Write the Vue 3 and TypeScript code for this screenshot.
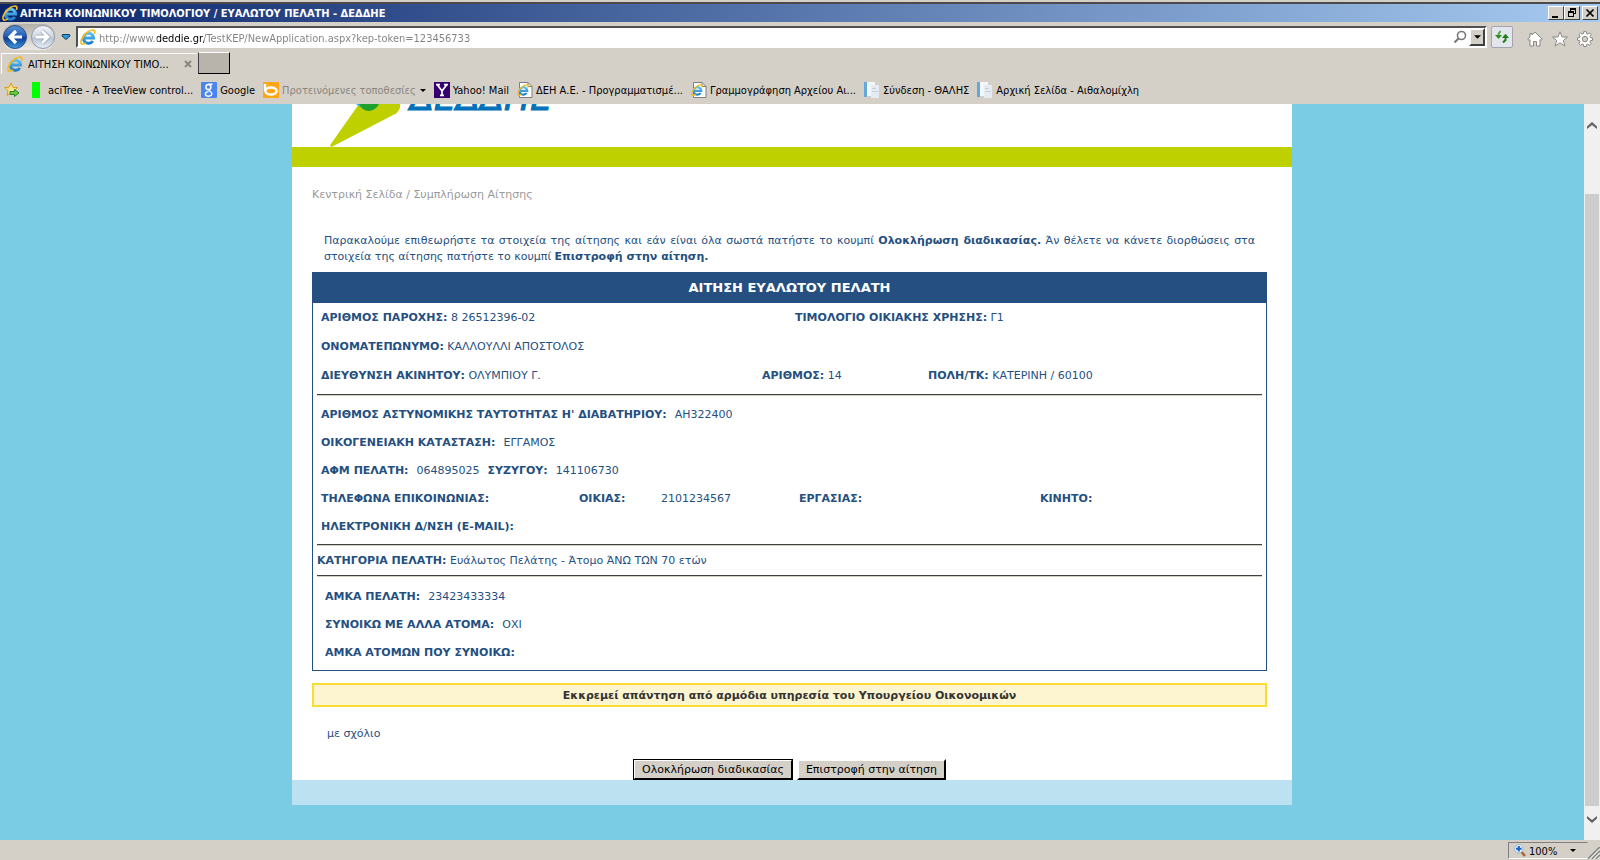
<script setup lang="ts">
import { ref } from 'vue'

interface Favorite {
  label: string
  icon: 'green' | 'google' | 'bing' | 'yahoo' | 'iepage' | 'doc'
  muted?: boolean
}

const address = ref('http://www.deddie.gr/TestKEP/NewApplication.aspx?kep-token=123456733')

const favorites: Favorite[] = [
  { label: 'aciTree - A TreeView control...', icon: 'green' },
  { label: 'Google', icon: 'google' },
  { label: 'Προτεινόμενες τοποθεσίες', icon: 'bing', muted: true },
  { label: 'Yahoo! Mail', icon: 'yahoo' },
  { label: 'ΔΕΗ Α.Ε. - Προγραμματισμέ...', icon: 'iepage' },
  { label: 'Γραμμογράφηση Αρχείου Αι...', icon: 'iepage' },
  { label: 'Σύνδεση - ΘΑΛΗΣ', icon: 'doc' },
  { label: 'Αρχική Σελίδα - Αιθαλομίχλη', icon: 'doc' },
]
</script>

<template>
  <div class="browser">
    <svg width="0" height="0" class="defs" aria-hidden="true">
      <defs>
        <linearGradient id="ieBlue" x1="0" y1="0" x2="0" y2="1">
          <stop offset="0" stop-color="#5cc0f0" />
          <stop offset="1" stop-color="#1c7fcb" />
        </linearGradient>
        <linearGradient id="navBlue" x1="0" y1="0" x2="0" y2="1">
          <stop offset="0" stop-color="#5f93d4" />
          <stop offset="0.45" stop-color="#2360b4" />
          <stop offset="0.55" stop-color="#0f3f92" />
          <stop offset="1" stop-color="#3f9be6" />
        </linearGradient>
        <linearGradient id="navPale" x1="0" y1="0" x2="0" y2="1">
          <stop offset="0" stop-color="#f2f4f7" />
          <stop offset="0.5" stop-color="#d0d7e2" />
          <stop offset="0.55" stop-color="#b9c4d6" />
          <stop offset="1" stop-color="#e6edf6" />
        </linearGradient>
        <symbol id="ie" viewBox="0 0 16 16">
          <path d="M4.4 9H13.6A5.100 5 0 1 0 12.800 12" fill="none" stroke="url(#ieBlue)" stroke-width="3" />
          <path d="M1.600 14.800C-.6 12.600 3.400 5.600 8.400 2.600C12.600 .2 15.900 .4 14.600 4.200" fill="none" stroke="#f5b921" stroke-width="1.700" stroke-linecap="round" />
          <path d="M1.600 14.800C2.600 15.600 4.200 15 5.600 14" fill="none" stroke="#f5b921" stroke-width="1.400" stroke-linecap="round" />
        </symbol>
      </defs>
    </svg>

    <header class="titlebar">
      <svg class="ico16"><use href="#ie" /></svg>
      <h1>ΑΙΤΗΣΗ ΚΟΙΝΩΝΙΚΟΥ ΤΙΜΟΛΟΓΙΟΥ / ΕΥΑΛΩΤΟΥ ΠΕΛΑΤΗ - ΔΕΔΔΗΕ</h1>
      <div class="winbtns">
        <button type="button" aria-label="Minimize">
          <svg viewBox="0 0 14 12"><path d="M3 9h6v2H3z" /></svg>
        </button>
        <button type="button" aria-label="Restore">
          <svg viewBox="0 0 14 12"><path d="M5 1h6v6H9V6h1V3H6v1H5zM3 4h6v6H3zM4 6v3h4V6z" fill-rule="evenodd" /></svg>
        </button>
        <button type="button" aria-label="Close" class="close">
          <svg viewBox="0 0 14 12"><path d="M3.500 2.500l7 7M10.500 2.500l-7 7" fill="none" stroke="#000" stroke-width="1.700" /></svg>
        </button>
      </div>
    </header>

    <div class="navrow">
      <div class="backfwd">
        <button type="button" aria-label="Back">
          <svg viewBox="0 0 26 26">
            <circle cx="13" cy="13" r="11.500" fill="url(#navBlue)" stroke="#2b4f86" />
            <path d="M20 13H8.500M14 7L8 13L14 19" fill="none" stroke="#fff" stroke-width="3.200" />
          </svg>
        </button>
        <button type="button" aria-label="Forward">
          <svg viewBox="0 0 26 26">
            <circle cx="13" cy="13" r="11.500" fill="url(#navPale)" stroke="#8e99ab" />
            <path d="M6 13H17.500M12 7L18 13L12 19" fill="none" stroke="#9aa5b6" stroke-width="4.400" />
            <path d="M6 13H17.500M12 7L18 13L12 19" fill="none" stroke="#fff" stroke-width="2.800" />
          </svg>
        </button>
      </div>
      <button type="button" class="recent" aria-label="Recent pages">
        <svg viewBox="0 0 10 8"><path d="M1.500 1.500H8.500L9 3L5 6.500L1 3z" fill="#2c9ad6" stroke="#123f63" /></svg>
      </button>
      <form class="address" @submit.prevent>
        <svg class="ico16"><use href="#ie" /></svg>
        <input v-model="address" type="text" aria-label="Address" />
        <button type="button" class="search" aria-label="Search">
          <svg viewBox="0 0 14 14"><circle cx="8.500" cy="5.500" r="4" fill="none" stroke="#7a7a7a" stroke-width="1.600" /><path d="M5.500 8.500L1.500 12.500" stroke="#7a7a7a" stroke-width="2.200" /></svg>
        </button>
        <button type="button" class="drop" aria-label="Show address history">
          <svg viewBox="0 0 8 4"><path d="M0 0H8L4 4z" /></svg>
        </button>
      </form>
      <button type="button" class="refresh" aria-label="Refresh">
        <svg viewBox="0 0 16 16">
          <path d="M6.500 2.200L4.500 5V7.500" fill="none" stroke="#57a83b" stroke-width="2" />
          <path d="M1 6H8L4.500 10z" fill="#2f8b22" />
          <path d="M9 13.500L11.500 11V8" fill="none" stroke="#1f7f18" stroke-width="2" />
          <path d="M8 9H15L11.500 4.800z" fill="#1f7f18" />
        </svg>
      </button>
      <div class="tools">
        <button type="button" aria-label="Home">
          <svg viewBox="0 0 16 16"><path d="M8 1L15.300 8.200L14 9.400L13 8.600V15H9.500V10.500H6.500V15H3V8.600L2 9.400L.7 8.200L3 6V2.500H5V4z" /></svg>
        </button>
        <button type="button" aria-label="Favorites">
          <svg viewBox="0 0 16 16"><path d="M8 .8L10.100 6H15.500L11.300 9.500L12.900 15L8 11.800L3.100 15L4.700 9.500L.5 6H5.900z" /></svg>
        </button>
        <button type="button" aria-label="Tools">
          <svg viewBox="0 0 16 16"><path fill-rule="evenodd" d="M6.800.6H9.200L9.600 2.700L10.900 3.200L12.700 2L14.300 3.700L13 5.400L13.400 6.600L15.500 7V9.300L13.400 9.700L12.900 11L14.100 12.700L12.500 14.300L10.800 13.100L9.600 13.500L9.200 15.500H6.800L6.400 13.500L5.200 13L3.500 14.200L1.800 12.500L3 10.800L2.600 9.600L.5 9.200V6.900L2.600 6.500L3.100 5.300L1.900 3.600L3.500 2L5.200 3.200L6.400 2.700zM8 5.400A2.700 2.700 0 1 0 8 10.800A2.700 2.700 0 1 0 8 5.400z" /></svg>
        </button>
      </div>
    </div>

    <div class="tabs" role="tablist">
      <div class="tab" role="tab" aria-selected="true">
        <svg class="ico16"><use href="#ie" /></svg>
        <span>ΑΙΤΗΣΗ ΚΟΙΝΩΝΙΚΟΥ ΤΙΜΟ...</span>
        <button type="button" aria-label="Close tab">
          <svg viewBox="0 0 8 8"><path d="M1 1L7 7M7 1L1 7" stroke="#8a8680" stroke-width="2" /></svg>
        </button>
      </div>
      <button type="button" class="newtab" aria-label="New tab"></button>
    </div>

    <nav class="favorites">
      <button type="button" class="addfav" aria-label="Add to favorites">
        <svg viewBox="0 0 16 16">
          <path d="M7 1L8.900 5.200L13.500 5.600L10 8.700L11 13.400L7 11L3 13.400L4 8.700L.6 5.600L5.100 5.200z" fill="#fbe48a" stroke="#dc9b1e" />
          <path d="M6 9.500H10.500V7.500L15 11L10.500 14.500V12.500H6z" fill="#6cc644" stroke="#2b8a22" />
        </svg>
      </button>
      <a v-for="f in favorites" :key="f.label" href="#" :class="['fav', f.icon, { muted: f.muted }]">
        <svg v-if="f.icon === 'green'" class="ico16" viewBox="0 0 16 16"><path d="M0 0H8V16H0z" fill="#0f0" /></svg>
        <svg v-else-if="f.icon === 'google'" class="ico16" viewBox="0 0 16 16">
          <rect width="16" height="16" rx="1" fill="#4a86f0" />
          <ellipse cx="7.400" cy="5" rx="2.500" ry="2.600" fill="none" stroke="#fff" stroke-width="1.500" />
          <path d="M7.500 2.200H11.500M8.300 7.500C7 9 10.800 9.200 10.800 11.600A3.200 2.300 0 1 1 7.500 9.600" fill="none" stroke="#fff" stroke-width="1.400" />
        </svg>
        <svg v-else-if="f.icon === 'bing'" class="ico16" viewBox="0 0 16 16">
          <rect width="16" height="16" fill="#ffa717" />
          <path d="M2 2V9" fill="none" stroke="#fff" stroke-width="2.400" />
          <ellipse cx="8" cy="9" rx="5.600" ry="3.500" fill="none" stroke="#fff" stroke-width="2.400" />
        </svg>
        <svg v-else-if="f.icon === 'yahoo'" class="ico16" viewBox="0 0 16 16">
          <rect width="16" height="16" fill="#35006d" />
          <path d="M3.500 3L8 9V13.500M12.500 3L8 9M2 2.700H6M10 2.700H14M6 13.300H10" fill="none" stroke="#fff" stroke-width="1.700" />
        </svg>
        <svg v-else-if="f.icon === 'iepage'" class="ico16" viewBox="0 0 16 16">
          <path d="M2.500 .5H11L15 4.500V15.500H2.500z" fill="#fff" stroke="#7d7d7d" />
          <path d="M11 .5V4.500H15" fill="none" stroke="#7d7d7d" />
          <use href="#ie" x="0" y="2" width="12" height="12" />
        </svg>
        <svg v-else class="ico16" viewBox="0 0 16 16">
          <path d="M2 0H11V14H2z" fill="#f4f7fa" />
          <path d="M7 3H15V16H7z" fill="#e6ebf1" />
          <path d="M8 6H12V7H8zM8 9H14V10H8z" fill="#c6d0da" />
          <path d="M0 0H3V15H0z" fill="#63a8d8" />
        </svg>
        <span>{{ f.label }}</span>
        <svg v-if="f.muted" class="caret" viewBox="0 0 6 3"><path d="M0 0H6L3 3z" /></svg>
      </a>
    </nav>

    <div class="viewport">
      <main class="canvas">
        <div class="page">
          <div class="brand">
            <svg width="240" height="43" viewBox="0 0 240 43" role="img" aria-label="ΔΕΔΔΗΕ">
              <path d="M29 0L0.500 40.500Q-.5 43.500 2.500 42.500L66 9.500Q71 5 70 0z" fill="#bed000" />
              <path d="M26 0H31L33 3Q29 3 28 1.500z" fill="#2fb6e4" />
              <path d="M29 0Q32 7 39 7Q46 6 49 0z" fill="#1fa12e" />
              <text x="80" y="6" class="brandname">ΔΕΔΔΗΕ</text>
            </svg>
          </div>
          <div class="stripe"></div>

          <div class="content">
            <nav class="crumbs">
              <a href="#">Κεντρική Σελίδα</a> / <a href="#">Συμπλήρωση Αίτησης</a>
            </nav>
            <p class="intro">
              Παρακαλούμε επιθεωρήστε τα στοιχεία της αίτησης και εάν είναι όλα σωστά πατήστε το κουμπί
              <b>Ολοκλήρωση διαδικασίας.</b> Άν θέλετε να κάνετε διορθώσεις στα στοιχεία της αίτησης πατήστε το
              κουμπί <b>Επιστροφή στην αίτηση.</b>
            </p>

            <section class="card">
              <h2>ΑΙΤΗΣΗ ΕΥΑΛΩΤΟΥ ΠΕΛΑΤΗ</h2>
              <div class="group supply">
                <div class="row two">
                  <p><b>ΑΡΙΘΜΟΣ ΠΑΡΟΧΗΣ:</b> 8 26512396-02</p>
                  <p><b>ΤΙΜΟΛΟΓΙΟ ΟΙΚΙΑΚΗΣ ΧΡΗΣΗΣ:</b> Γ1</p>
                </div>
                <div class="row">
                  <p><b>ΟΝΟΜΑΤΕΠΩΝΥΜΟ:</b> ΚΑΛΛΟΥΛΛΙ ΑΠΟΣΤΟΛΟΣ</p>
                </div>
                <div class="row three">
                  <p><b>ΔΙΕΥΘΥΝΣΗ ΑΚΙΝΗΤΟΥ:</b> ΟΛΥΜΠΙΟΥ Γ.</p>
                  <p><b>ΑΡΙΘΜΟΣ:</b> 14</p>
                  <p><b>ΠΟΛΗ/ΤΚ:</b> ΚΑΤΕΡΙΝΗ / 60100</p>
                </div>
              </div>
              <hr />
              <div class="group person">
                <div class="row pair"><b>ΑΡΙΘΜΟΣ ΑΣΤΥΝΟΜΙΚΗΣ ΤΑΥΤΟΤΗΤΑΣ Η' ΔΙΑΒΑΤΗΡΙΟΥ:</b><span>ΑΗ322400</span></div>
                <div class="row pair"><b>ΟΙΚΟΓΕΝΕΙΑΚΗ ΚΑΤΑΣΤΑΣΗ:</b><span>ΕΓΓΑΜΟΣ</span></div>
                <div class="row pair"><b>ΑΦΜ ΠΕΛΑΤΗ:</b><span>064895025</span><b>ΣΥΖΥΓΟΥ:</b><span>141106730</span></div>
                <div class="row phones"><b>ΤΗΛΕΦΩΝΑ ΕΠΙΚΟΙΝΩΝΙΑΣ:</b><b>ΟΙΚΙΑΣ:</b><span>2101234567</span><b>ΕΡΓΑΣΙΑΣ:</b><b>ΚΙΝΗΤΟ:</b></div>
                <div class="row pair"><b>ΗΛΕΚΤΡΟΝΙΚΗ Δ/ΝΣΗ (E-MAIL):</b></div>
              </div>
              <hr />
              <p class="category"><b>ΚΑΤΗΓΟΡΙΑ ΠΕΛΑΤΗ:</b> Ευάλωτος Πελάτης - Άτομο ΆΝΩ ΤΩΝ 70 ετών</p>
              <hr />
              <div class="group amka">
                <div class="row pair"><b>ΑΜΚΑ ΠΕΛΑΤΗ:</b><span>23423433334</span></div>
                <div class="row pair"><b>ΣΥΝΟΙΚΩ ΜΕ ΑΛΛΑ ΑΤΟΜΑ:</b><span>ΟΧΙ</span></div>
                <div class="row pair"><b>ΑΜΚΑ ΑΤΟΜΩΝ ΠΟΥ ΣΥΝΟΙΚΩ:</b></div>
              </div>
            </section>

            <p class="notice">Εκκρεμεί απάντηση από αρμόδια υπηρεσία του Υπουργείου Οικονομικών</p>
            <p class="comment">με σχόλιο</p>
            <div class="actions">
              <button type="button" class="default">Ολοκλήρωση διαδικασίας</button>
              <button type="button">Επιστροφή στην αίτηση</button>
            </div>
          </div>
          <footer class="foot"></footer>
        </div>
      </main>
      <div class="scrollbar">
        <button type="button" aria-label="Scroll up">
          <svg viewBox="0 0 10 8"><path d="M0 7V4.500L5 0L10 4.500V7L5 3z" /></svg>
        </button>
        <div class="track"><div class="thumb"></div></div>
        <button type="button" aria-label="Scroll down">
          <svg viewBox="0 0 10 8"><path d="M0 1V3.500L5 8L10 3.500V1L5 5z" /></svg>
        </button>
      </div>
    </div>

    <footer class="status">
      <button type="button" class="zoom">
        <svg class="mag" viewBox="0 0 12 13">
          <path d="M7.500 8L11 12" stroke="#a8622a" stroke-width="2.400" />
          <circle cx="4.800" cy="4.800" r="4.200" fill="#e9f3fc" stroke="#9db4cc" />
          <path d="M4.800 2V7.600M2 4.800H7.600" stroke="#1a62c4" stroke-width="2" />
        </svg>
        <span>100%</span>
        <svg class="caret" viewBox="0 0 6 3"><path d="M0 0H6L3 3z" /></svg>
      </button>
      <svg class="grip" viewBox="0 0 12 12">
        <path d="M0 12L12 0M4 12L12 4M8 12L12 8" stroke="#808080" stroke-width="1.600" />
        <path d="M1.500 12L12 1.500M5.500 12L12 5.500M9.500 12L12 9.500" stroke="#fff" />
      </svg>
    </footer>
  </div>
</template>

<style>
body {
  background: #d4d0c8;
}
</style>

<style scoped>
.browser {
  display: flex;
  flex-direction: column;
  height: 100vh;
  background: #d4d0c8;
  color: #000;
  font: 11px/14px 'DejaVu Sans Condensed', 'DejaVu Sans', sans-serif;
  overflow: hidden;
}
.defs {
  position: absolute;
}
button {
  display: flex;
  align-items: center;
  justify-content: center;
  margin: 0;
  padding: 0;
  border: 0;
  background: none;
  color: inherit;
  font: inherit;
}
svg {
  display: block;
  flex: none;
}
p,
h1,
h2 {
  margin: 0;
  font-size: inherit;
}
.ico16 {
  width: 16px;
  height: 16px;
}

.titlebar {
  display: flex;
  align-items: center;
  gap: 2px;
  height: 18px;
  margin-top: 2px;
  padding: 0 2px;
  border-top: 2px solid #4a4a4a;
  background: linear-gradient(90deg, #0a246a, #a6caf0);
  color: #fff;
}
.titlebar h1 {
  flex: 1;
  line-height: 16px;
  padding-top: 2px;
  white-space: nowrap;
}
.winbtns {
  display: flex;
}
.winbtns button {
  width: 16px;
  height: 14px;
  border: 1px solid;
  border-color: #fff #404040 #404040 #fff;
  background: #d4d0c8;
}
.winbtns svg {
  width: 14px;
  height: 12px;
}
.winbtns .close {
  margin-left: 2px;
}

.navrow {
  display: flex;
  align-items: center;
  height: 30px;
  padding-left: 2px;
}
.backfwd {
  display: flex;
  gap: 2px;
  border-radius: 14px;
  background: linear-gradient(#b4b1ab, #ebe9e4);
}
.backfwd svg {
  width: 26px;
  height: 26px;
}
.recent {
  width: 20px;
}
.recent svg {
  width: 10px;
  height: 8px;
}
.address {
  display: flex;
  align-items: center;
  flex: 1;
  height: 18px;
  padding-left: 2px;
  border: 2px solid;
  border-color: #505050 #fff #fff #505050;
  background: #fff;
}
.address input {
  flex: 1;
  min-width: 0;
  height: 18px;
  padding: 2px 0 0 3px;
  border: 0;
  outline: 0;
  background: linear-gradient(90deg, #808080 61px, #000 61px 108px, #808080 108px);
  background-clip: text;
  -webkit-background-clip: text;
  color: transparent;
  font: 11px/16px 'DejaVu Sans Condensed', 'DejaVu Sans', sans-serif;
}
.search svg {
  width: 14px;
  height: 14px;
}
.drop {
  width: 16px;
  height: 18px;
  margin-left: 2px;
  border: 2px solid;
  border-color: #fff #404040 #404040 #fff;
  background: #d4d0c8;
}
.drop svg {
  width: 7px;
  height: 4px;
}
.refresh {
  width: 22px;
  height: 22px;
  margin-left: 4px;
  border: 1px solid #a4a4b0;
  border-radius: 2px;
  background: #e4e6ee;
}
.refresh svg {
  width: 16px;
  height: 16px;
}
.tools {
  display: flex;
  gap: 9px;
  margin: 4px 7px 0 14px;
}
.tools svg {
  width: 16px;
  height: 16px;
  fill: #fff;
  stroke: #8b8781;
}

.tabs {
  display: flex;
  align-items: flex-end;
  height: 22px;
  padding-left: 1px;
}
.tab {
  display: flex;
  align-items: center;
  gap: 5px;
  width: 190px;
  height: 20px;
  padding-left: 5px;
  border-top: 1px solid #fff;
  border-left: 1px solid #fff;
}
.tab span {
  flex: 1;
  padding-top: 2px;
  white-space: nowrap;
}
.tab button {
  width: 18px;
}
.tab button svg {
  width: 8px;
  height: 8px;
}
.newtab {
  width: 32px;
  height: 22px;
  margin-left: 1px;
  border: 1px solid;
  border-color: #fff #000 #000 #404040;
  background: #b8b4ac;
}

.favorites {
  display: flex;
  align-items: center;
  height: 30px;
  padding-top: 2px;
  padding-left: 4px;
  box-sizing: border-box;
}
.addfav {
  margin-right: 12px;
}
.addfav svg {
  width: 16px;
  height: 16px;
}
.fav {
  display: flex;
  align-items: center;
  gap: 3px;
  margin-right: 8px;
  color: #000;
  text-decoration: none;
  white-space: nowrap;
}
.fav span {
  padding-top: 2px;
}
.fav.green {
  gap: 0;
}
.muted {
  color: #8a867f;
}
.caret {
  width: 6px;
  height: 3px;
  margin-left: 1px;
}

.viewport {
  display: flex;
  flex: 1;
  min-height: 0;
}
.canvas {
  flex: 1;
  overflow: hidden;
  background: #7acce4;
}
.page {
  width: 100%;
  max-width: 1000px;
  margin: 0 auto;
  background: #fff;
  color: #254f80;
  font: 11px/16px Verdana, 'DejaVu Sans', sans-serif;
}
.brand {
  padding-left: 38px;
}
.brandname {
  fill: #0072bc;
  stroke: #0072bc;
  font: italic 35px 'DejaVu Sans', sans-serif;
}
.stripe {
  height: 20px;
  background: #bed000;
}
.content {
  padding: 20px 25px 0 20px;
}
.crumbs,
.crumbs a {
  color: #999;
  text-decoration: none;
}
.intro {
  margin: 30px 12px 7px;
  text-align: justify;
}
.card {
  border: 1px solid #254f80;
}
.card h2 {
  background: #254f80;
  color: #fff;
  font-size: 13px;
  line-height: 30px;
  text-align: center;
}
.group {
  padding: 0 8px;
}
.row {
  line-height: 28px;
}
.supply .row {
  line-height: 29px;
}
.supply {
  padding-bottom: 4px;
}
.row.two {
  display: grid;
  grid-template-columns: 474fr 463fr;
}
.row.three {
  display: grid;
  grid-template-columns: 441fr 166fr 330fr;
}
.pair {
  display: flex;
  gap: 8px;
  min-height: 28px;
}
.phones {
  display: grid;
  grid-template-columns: 258fr 82fr 138fr 241fr 218fr;
}
hr {
  height: 0;
  margin: 0 4px;
  border: 0;
  border-top: 1px solid #404040;
  border-bottom: 1px solid #d4d0c8;
}
.person {
  padding-top: 5px;
  padding-bottom: 3px;
}
.category {
  padding: 1px 4px 0;
  line-height: 28px;
}
.amka {
  padding: 6px 12px 3px;
}
.notice {
  margin-top: 12px;
  padding-top: 1px;
  border: 2px solid #fadc32;
  background: #fcf5d0;
  color: #333;
  font-weight: bold;
  line-height: 19px;
  text-align: center;
}
.comment {
  margin: 19px 15px 17px;
}
.actions {
  display: flex;
  justify-content: center;
  gap: 4px;
}
.actions button {
  height: 21px;
  padding: 1px 7px 0;
  border: 2px outset #d4d0c8;
  border-color: #fff #505050 #505050 #fff;
  background: #d4d0c8;
  color: #000;
}
.actions .default {
  outline: 1px solid #000;
  outline-offset: -1px;
}
.foot {
  height: 25px;
  background: #bce2f1;
}

.scrollbar {
  display: flex;
  flex-direction: column;
  width: 16px;
  background: #f0f0f0;
}
.scrollbar button {
  height: 44px;
}
.scrollbar button:last-child {
  height: 34px;
  padding-bottom: 8px;
}
.scrollbar svg {
  width: 10px;
  height: 8px;
  fill: #606060;
}
.track {
  display: flex;
  flex: 1;
  align-items: flex-end;
}
.thumb {
  flex: 1;
  height: 93%;
  margin: 0 1px;
  background: #cdcdcd;
}

.status {
  display: flex;
  align-items: flex-end;
  justify-content: flex-end;
  height: 20px;
}
.zoom {
  justify-content: flex-start;
  gap: 3px;
  width: 80px;
  height: 17px;
  margin-bottom: 1px;
  padding-left: 5px;
  border: 1px solid;
  border-color: #808080 #d4d0c8 #fff #808080;
}
.zoom span {
  padding-top: 2px;
}
.zoom .caret {
  margin-left: 10px;
}
.zoom .mag {
  width: 12px;
  height: 13px;
}
.grip {
  width: 12px;
  height: 12px;
  margin-bottom: 1px;
}
</style>
